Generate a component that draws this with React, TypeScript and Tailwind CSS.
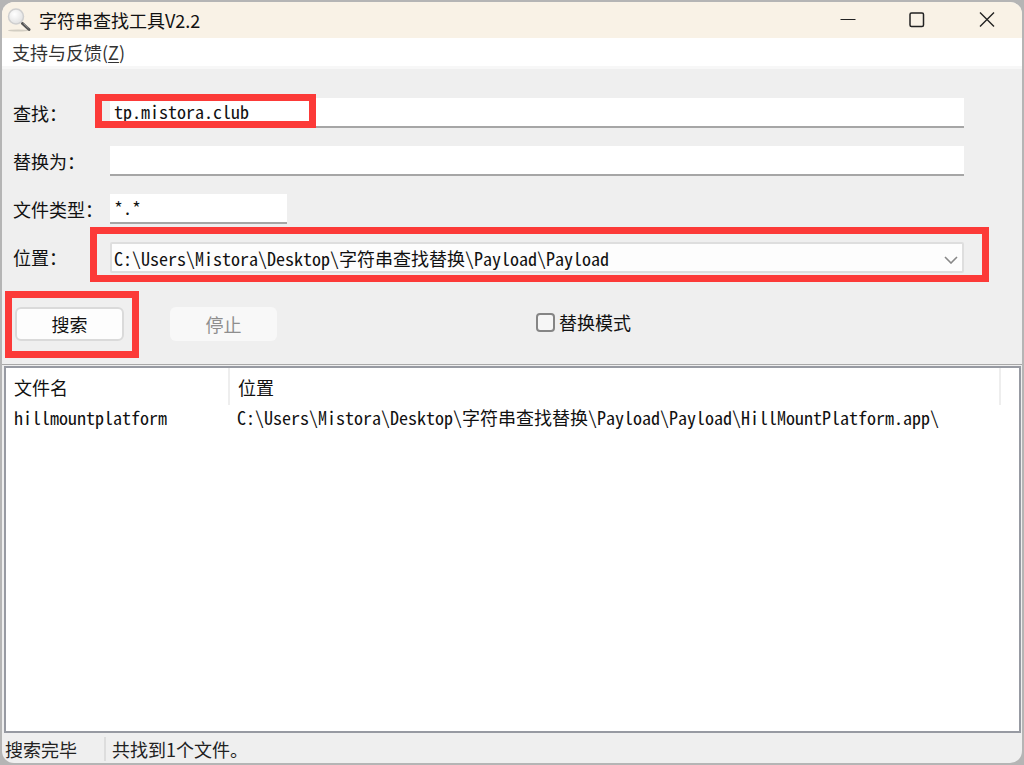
import { useState, type ReactNode } from 'react';

const mono = "font-['Noto_Sans_Mono_CJK_SC','Liberation_Mono',monospace]";

const results = [
  {
    name: 'hillmountplatform',
    location: 'C:\\Users\\Mistora\\Desktop\\字符串查找替换\\Payload\\Payload\\HillMountPlatform.app\\',
  },
];

const locations = ['C:\\Users\\Mistora\\Desktop\\字符串查找替换\\Payload\\Payload'];

function Marker({ className }: { className: string }) {
  return <span aria-hidden="true" className={`pointer-events-none absolute border-[7px] border-[#fc3a38] ${className}`} />;
}

function Field({ id, label, children }: { id: string; label: string; children: ReactNode }) {
  return (
    <div className="flex h-[30px] items-center">
      <label htmlFor={id} className="w-[97px] shrink-0 whitespace-nowrap">
        {label}
      </label>
      <div className="relative h-full min-w-0 flex-1">{children}</div>
    </div>
  );
}

function SearchIcon() {
  return (
    <svg viewBox="0 0 24 24" className="size-6 shrink-0" aria-hidden="true">
      <defs>
        <radialGradient id="lens" cx="40%" cy="35%" r="65%">
          <stop offset="0" stopColor="#ffffff" />
          <stop offset="1" stopColor="#e2e2e2" />
        </radialGradient>
      </defs>
      <ellipse cx="11" cy="22.5" rx="10" ry="1" fill="#d2cdc2" />
      <path d="M13.5 13.5l3 3" stroke="#aaa" strokeWidth="2" />
      <path d="M15.5 15.5l6.5 6" stroke="#555" strokeWidth="3" strokeLinecap="round" />
      <path d="M16.5 15.5l5 4.5" stroke="#999" strokeWidth="1" />
      <circle cx="9" cy="8.5" r="7.5" fill="url(#lens)" stroke="#cfcfcf" strokeWidth="1.5" />
    </svg>
  );
}

function TitleBar() {
  return (
    <header className="flex h-9 shrink-0 items-center bg-[#f9f2e6] pl-[5px]">
      <SearchIcon />
      <h1 className="ml-2 flex-1 text-[18px] leading-6">字符串查找工具V2.2</h1>
      <button aria-label="最小化" className="flex h-full w-[68px] items-center justify-center">
        <svg viewBox="0 0 16 16" className="size-4" fill="none" stroke="#222" strokeWidth="1">
          <path d="M0.5 7.5h15" />
        </svg>
      </button>
      <button aria-label="最大化" className="flex h-full w-[70px] items-center justify-center">
        <svg viewBox="0 0 16 16" className="size-4" fill="none" stroke="#222" strokeWidth="1.5">
          <rect x="1" y="1" width="13.5" height="13.5" rx="1.5" />
        </svg>
      </button>
      <button aria-label="关闭" className="flex h-full w-[70px] items-center justify-center">
        <svg viewBox="0 0 16 16" className="size-4" fill="none" stroke="#222" strokeWidth="1.4">
          <path d="M1 0.5l14 14M15 0.5L1 14.5" />
        </svg>
      </button>
    </header>
  );
}

export default function App() {
  const [find, setFind] = useState('tp.mistora.club');
  const [replace, setReplace] = useState('');
  const [fileType, setFileType] = useState('*.*');
  const [location, setLocation] = useState(locations[0]);
  const [replaceMode, setReplaceMode] = useState(false);

  const input = `block h-[30px] border-b-2 border-[#a6a6a6] bg-white px-1 pb-0.5 text-[18px] leading-6 outline-none ${mono}`;

  return (
    <div className="h-screen min-h-[520px] bg-[#b5b5b5] p-0.5 font-['Noto_Sans_CJK_SC',sans-serif] text-[18px] leading-6 text-[#111]">
      <div className="flex h-full flex-col overflow-hidden rounded-xl bg-[#efefef]">
        <TitleBar />

        <nav className="flex h-7 shrink-0 items-center bg-white pl-2.5">
          <button className="text-[#333]">
            支持与反馈(<u className="underline-offset-2">Z</u>)
          </button>
        </nav>

        <main className="flex min-h-0 flex-1 flex-col border-t-[3px] border-[#f7f7f7]">
          <form className="shrink-0 pt-[29px] pr-[58px] pb-[23px] pl-[11px]" onSubmit={(event) => event.preventDefault()}>
            <div className="flex flex-col gap-[18px]">
              <Field id="find" label="查找：">
                <input id="find" className={`${input} w-full`} value={find} onChange={(event) => setFind(event.target.value)} />
                <Marker className="-top-1 -left-[15px] h-[34px] w-[221px]" />
              </Field>
              <Field id="replace" label="替换为：">
                <input
                  id="replace"
                  className={`${input} w-full`}
                  value={replace}
                  onChange={(event) => setReplace(event.target.value)}
                />
              </Field>
              <Field id="file-type" label="文件类型：">
                <input
                  id="file-type"
                  className={`${input} w-[177px]`}
                  value={fileType}
                  onChange={(event) => setFileType(event.target.value)}
                />
              </Field>
              <Field id="location" label="位置：">
                <select
                  id="location"
                  className={`block h-[31px] w-full appearance-none rounded-[2px] border-2 border-[#dedede] bg-[#fdfdfd] px-0.5 text-[18px] leading-6 outline-none ${mono}`}
                  value={location}
                  onChange={(event) => setLocation(event.target.value)}
                >
                  {locations.map((path) => (
                    <option key={path}>{path}</option>
                  ))}
                </select>
                <svg
                  viewBox="0 0 14 8"
                  className="pointer-events-none absolute top-3.5 right-1.5 h-2 w-3.5"
                  fill="none"
                  stroke="#888"
                  strokeWidth="1.6"
                  aria-hidden="true"
                >
                  <path d="M1 1l6 6 6-6" />
                </svg>
                <Marker className="-top-[15px] -right-[25px] -left-5 h-[55px]" />
              </Field>
            </div>

            <div className="mt-[35px] flex items-center">
              <div className="relative">
                <button
                  type="submit"
                  className="ml-0.5 block h-[34px] w-[109px] rounded-md border-2 border-[#dadada] bg-[#fdfdfd] text-center"
                >
                  搜索
                </button>
                <Marker className="-top-4 -left-2 h-[67px] w-[134px]" />
              </div>
              <button type="button" disabled className="ml-[46px] h-[34px] w-[107px] rounded-md bg-[#f8f8f8] text-[#8e8e8e]">
                停止
              </button>
              <label className="ml-[259px] flex items-center gap-1 pb-1">
                <input
                  type="checkbox"
                  className="size-[19px] appearance-none rounded-[4px] border-2 border-[#858585] bg-[#f6f6f6] checked:bg-[#0067c0]"
                  checked={replaceMode}
                  onChange={(event) => setReplaceMode(event.target.checked)}
                />
                替换模式
              </label>
            </div>
          </form>

          <div className="h-0.5 shrink-0 border-t border-[#a8a8a8]" />

          <div className="mr-px ml-0.5 min-h-0 flex-1 overflow-auto border-2 border-[#979aa2] bg-white">
            <table className="w-full table-fixed text-left">
              <colgroup>
                <col className="w-[223px]" />
                <col />
                <col className="w-[19px]" />
              </colgroup>
              <thead>
                <tr className="h-[37px]">
                  <th className="border-r-2 border-[#eeeeee] pl-2 font-normal">文件名</th>
                  <th className="border-r-2 border-[#eeeeee] pl-2 font-normal">位置</th>
                  <th />
                </tr>
              </thead>
              <tbody className={mono}>
                {results.map((file) => (
                  <tr key={file.location + file.name}>
                    <td className="truncate pl-2">{file.name}</td>
                    <td className="truncate pl-2">{file.location}</td>
                    <td />
                  </tr>
                ))}
              </tbody>
            </table>
          </div>
        </main>

        <footer className="flex h-[30px] shrink-0 items-center pt-0.5 pl-[3px] text-[#222]">
          <span className="w-[101px] border-r-2 border-[#dddddd]">搜索完毕</span>
          <span className="pl-1.5">共找到1个文件。</span>
        </footer>
      </div>
    </div>
  );
}
